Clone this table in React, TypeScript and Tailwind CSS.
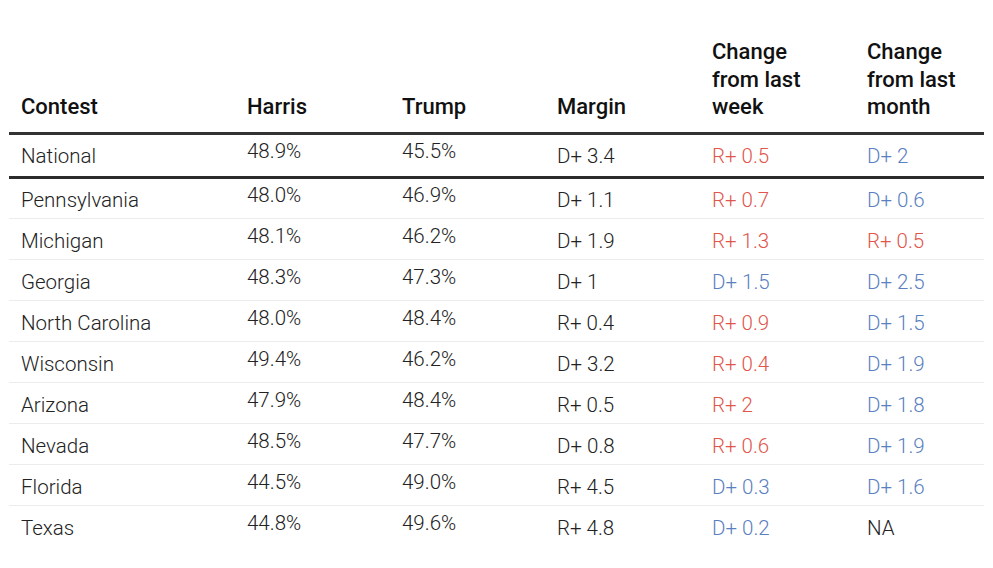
const rows = [
  { name: "Pennsylvania", h: "48.0%", t: "46.9%", m: "D+ 1.1", w: "R+ 0.7", mo: "D+ 0.6" },
  { name: "Michigan", h: "48.1%", t: "46.2%", m: "D+ 1.9", w: "R+ 1.3", mo: "R+ 0.5" },
  { name: "Georgia", h: "48.3%", t: "47.3%", m: "D+ 1", w: "D+ 1.5", mo: "D+ 2.5" },
  { name: "North Carolina", h: "48.0%", t: "48.4%", m: "R+ 0.4", w: "R+ 0.9", mo: "D+ 1.5" },
  { name: "Wisconsin", h: "49.4%", t: "46.2%", m: "D+ 3.2", w: "R+ 0.4", mo: "D+ 1.9" },
  { name: "Arizona", h: "47.9%", t: "48.4%", m: "R+ 0.5", w: "R+ 2", mo: "D+ 1.8" },
  { name: "Nevada", h: "48.5%", t: "47.7%", m: "D+ 0.8", w: "R+ 0.6", mo: "D+ 1.9" },
  { name: "Florida", h: "44.5%", t: "49.0%", m: "R+ 4.5", w: "D+ 0.3", mo: "D+ 1.6" },
  { name: "Texas", h: "44.8%", t: "49.6%", m: "R+ 4.8", w: "D+ 0.2", mo: "NA" },
];

function tone(v: string) {
  if (v.startsWith("R+")) return "text-[#e0554c]";
  if (v.startsWith("D+")) return "text-[#5a80bf]";
  return "text-[#222]";
}

function Row({ r, national }: { r: (typeof rows)[number]; national?: boolean }) {
  const cell = national
    ? "px-3 pt-[2px] pb-0 h-[44px] align-middle"
    : "px-3 pt-[4px] pb-0 h-[41px] align-middle";
  const pct = national
    ? "px-3 pt-[2px] pb-[10px] h-[44px] align-middle"
    : "px-3 pt-[4px] pb-[10px] h-[41px] align-middle";
  return (
    <tr className={national ? "border-b-[3px] border-[#2b2b2b]" : "border-b border-[#ececec] last:border-b-0"}>
      <td className={cell}>{r.name}</td>
      <td className={pct}>{r.h}</td>
      <td className={pct}>{r.t}</td>
      <td className={cell}>{r.m}</td>
      <td className={`${cell} ${tone(r.w)}`}>{r.w}</td>
      <td className={`${cell} ${tone(r.mo)}`}>{r.mo}</td>
    </tr>
  );
}

export default function App() {
  return (
    <div className="w-[993px] h-[568px] bg-white pt-[38px] pl-[9px] font-['Roboto',sans-serif] text-[#222]">
      <table className="w-[975px] table-fixed border-collapse text-[20.5px] font-light leading-[24px]">
        <colgroup>
          <col className="w-[226px]" />
          <col className="w-[155px]" />
          <col className="w-[155px]" />
          <col className="w-[155px]" />
          <col className="w-[155px]" />
          <col className="w-[129px]" />
        </colgroup>
        <thead>
          <tr className="border-b-[3px] border-[#333]">
            {["Contest", "Harris", "Trump", "Margin", "Change from last week", "Change from last month"].map((h) => (
              <th
                key={h}
                className="pl-3 pr-6 pt-0 pb-[11px] text-left align-bottom text-[22px] font-medium leading-[27.5px] text-[#111]"
              >
                {h}
              </th>
            ))}
          </tr>
        </thead>
        <tbody>
          <Row national r={{ name: "National", h: "48.9%", t: "45.5%", m: "D+ 3.4", w: "R+ 0.5", mo: "D+ 2" }} />
          {rows.map((r) => (
            <Row key={r.name} r={r} />
          ))}
        </tbody>
      </table>
    </div>
  );
}
